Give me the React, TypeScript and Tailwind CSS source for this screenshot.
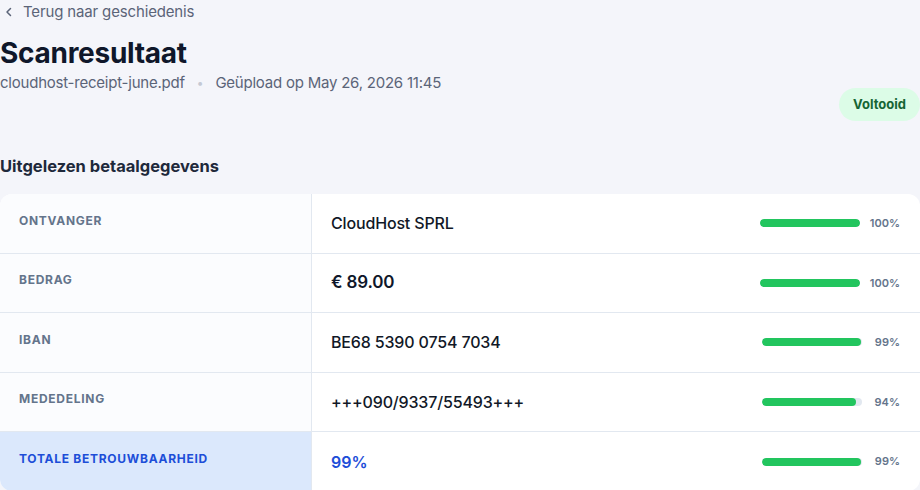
const rows = [
  { label: 'Ontvanger', value: 'CloudHost SPRL', conf: 100 },
  { label: 'Bedrag', value: '€ 89.00', conf: 100, strong: true },
  { label: 'IBAN', value: 'BE68 5390 0754 7034', conf: 99 },
  { label: 'Mededeling', value: '+++090/9337/55493+++', conf: 94 },
]

function Confidence({ conf }: { conf: number }) {
  return (
    <div className="flex items-center gap-[10px] pr-5">
      <div className="h-2 w-[100px] rounded-full bg-[#e2e8f0] overflow-hidden">
        <div className="h-full rounded-full bg-[#22c55e]" style={{ width: `${conf}%` }}></div>
      </div>
      <span className="min-w-[28px] text-right text-[11px] font-semibold text-[#64748b]">{conf}%</span>
    </div>
  )
}

export default function App() {
  return (
    <div className="min-h-screen bg-[#f4f5fa] text-[#0f172a]" style={{ fontFamily: 'Inter, "Noto Sans", sans-serif' }}>
      {/* Back link */}
      <div className="flex items-center h-6 pl-[5px] gap-[10px] text-[15px] tracking-[-0.01em] text-[#5b6478]">
        <svg className="w-[8px] h-[10px]" viewBox="0 0 8 10" fill="none" stroke="currentColor" strokeWidth="1.5" strokeLinecap="round" strokeLinejoin="round">
          <path d="M5.5 1.5 2 5l3.5 3.5" />
        </svg>
        <span>Terug naar geschiedenis</span>
      </div>

      {/* Header */}
      <div className="flex justify-between mt-3">
        <div>
          <h1 className="text-[28px] leading-[34px] font-bold tracking-[-0.01em] text-[#0f172a]">Scanresultaat</h1>
          <div className="mt-0.5 flex items-center text-[15px] leading-[22px] tracking-[-0.015em] text-[#5b6478]">
            <span>cloudhost-receipt-june.pdf</span>
            <span className="mx-[12px] text-[#c4c9d4] text-[12px]">•</span>
            <span>Geüpload op May 26, 2026 11:45</span>
          </div>
        </div>
        <div className="mt-[52px] self-start h-[33px] px-[14px] flex items-center rounded-full bg-[#dcfce7] text-[13px] font-bold text-[#166534]">
          Voltooid
        </div>
      </div>

      {/* Section */}
      <h2 className="mt-[33px] text-[16.5px] leading-6 font-bold text-[#1e293b]">Uitgelezen betaalgegevens</h2>

      <div className="mt-4 rounded-xl bg-white overflow-hidden">
        {rows.map((r, i) => (
          <div key={i} className="flex h-[59.5px] border-b border-[#e2e8f0]">
            <div className="w-[312px] shrink-0 border-r border-[#e2e8f0] bg-[#fbfcfe] pl-[19px] flex items-center pb-[5px] text-[12px] font-bold uppercase tracking-[0.06em] text-[#64748b]">
              {r.label}
            </div>
            <div className="flex-1 flex items-center justify-between pl-[19px]">
              <span className={r.strong ? 'text-[17px] font-semibold tracking-[-0.01em] text-[#0f172a]' : 'text-[16px] font-medium tracking-[-0.01em] text-[#111827]'}>{r.value}</span>
              <Confidence conf={r.conf} />
            </div>
          </div>
        ))}
        <div className="flex h-[59px]">
          <div className="w-[312px] shrink-0 border-r border-[#e2e8f0] bg-[#dbe8fc] pl-[19px] flex items-center pb-[5px] text-[12px] font-bold uppercase tracking-[0.06em] text-[#1d4ed8]">
            Totale betrouwbaarheid
          </div>
          <div className="flex-1 flex items-center justify-between pl-[19px]">
            <span className="text-[16px] font-semibold text-[#1d4ed8]">99%</span>
            <Confidence conf={99} />
          </div>
        </div>
      </div>
    </div>
  )
}
